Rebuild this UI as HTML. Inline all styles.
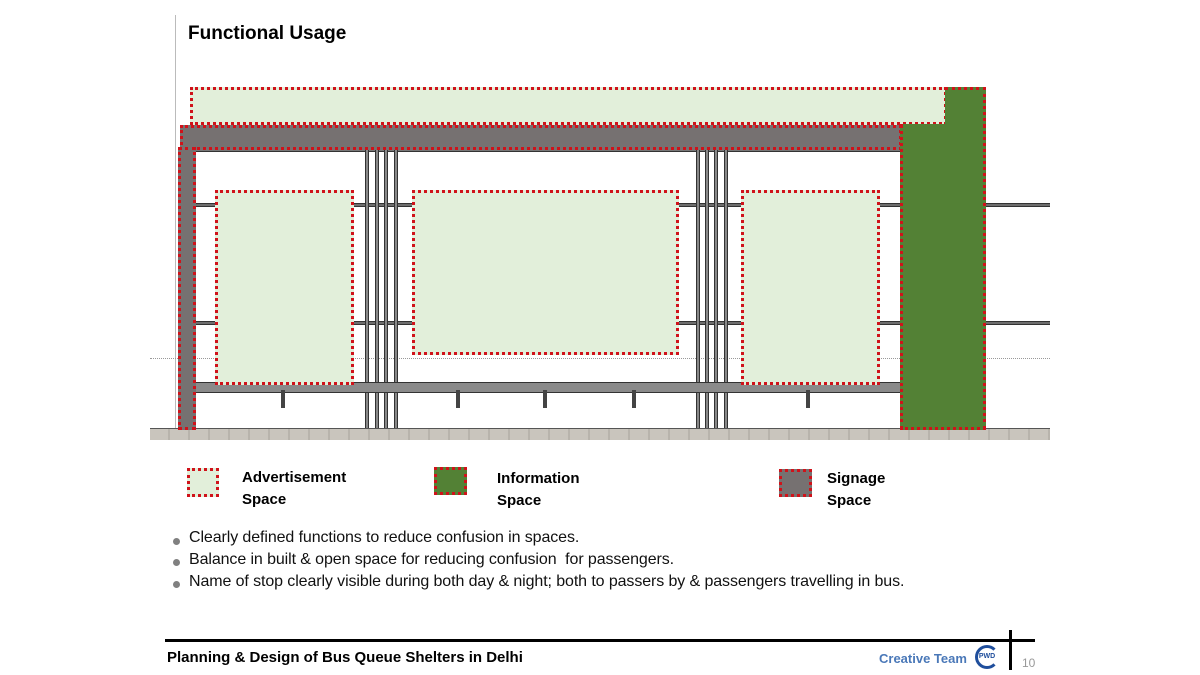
<!DOCTYPE html>
<html><head><style>
body{margin:0;width:1200px;height:675px;background:#fff;position:relative;overflow:hidden;font-family:"Liberation Sans",Arial,sans-serif}
div{position:absolute;box-sizing:border-box}
.ad{background:#e2efda;border:3px dotted #d0121a}
.rail{background:#6e6e6e;height:4px;border-top:1px solid #333;border-bottom:1px solid #333}
.post{width:4px;background:#888;border-left:1px solid #333;border-right:1px solid #333;top:150px;height:278px}
.t{font-weight:bold;font-size:15px;line-height:22px;color:#000}
.b{font-size:16px;color:#111;left:189px;white-space:nowrap;letter-spacing:-0.1px}
.dot{width:7px;height:7px;border-radius:50%;background:#808080;left:173px}
</style></head><body>
<div style="left:175px;top:15px;width:1px;height:425px;background:#bbb"></div>
<div style="left:188px;top:23px;font-size:19px;font-weight:bold">Functional Usage</div>
<div style="left:150px;top:358px;width:900px;border-top:1px dotted #999"></div>
<div class="rail" style="left:195px;top:203px;width:855px"></div>
<div class="rail" style="left:195px;top:321px;width:855px"></div>
<div style="left:195px;top:148px;width:706px;height:4px;background:#777;border-bottom:1px solid #333"></div>
<div class="post" style="left:365px"></div><div class="post" style="left:375px"></div><div class="post" style="left:384px"></div><div class="post" style="left:394px"></div>
<div class="post" style="left:696px"></div><div class="post" style="left:705px"></div><div class="post" style="left:714px"></div><div class="post" style="left:724px"></div>
<div style="left:195px;top:382px;width:706px;height:11px;background:#8a8a8a;border:1px solid #333"></div>
<div style="left:281px;top:390px;width:4px;height:18px;background:#444"></div>
<div style="left:456px;top:390px;width:4px;height:18px;background:#444"></div>
<div style="left:543px;top:390px;width:4px;height:18px;background:#444"></div>
<div style="left:632px;top:390px;width:4px;height:18px;background:#444"></div>
<div style="left:806px;top:390px;width:4px;height:18px;background:#444"></div>
<div style="left:150px;top:428px;width:900px;height:12px;background:repeating-linear-gradient(90deg,#c9c5bd 0 18px,#b8b4ac 18px 20px);border-top:1px solid #555"></div>
<div class="ad" style="left:190px;top:87px;width:757px;height:38px"></div>
<div style="left:180px;top:125px;width:722px;height:25px;background:#767171;border:3px dotted #d0121a"></div>
<div style="left:178px;top:147px;width:18px;height:283px;background:#767171;border:3px dotted #d0121a"></div>
<div style="left:945px;top:87px;width:41px;height:40px;background:#538135;border:3px dotted #d0121a;border-bottom:none;border-left:none"></div>
<div style="left:900px;top:124px;width:86px;height:306px;background:#538135;border:3px dotted #d0121a;border-top:none"></div>
<div class="ad" style="left:215px;top:190px;width:139px;height:195px"></div>
<div class="ad" style="left:412px;top:190px;width:267px;height:165px"></div>
<div class="ad" style="left:741px;top:190px;width:139px;height:195px"></div>
<div class="ad" style="left:187px;top:468px;width:32px;height:29px"></div>
<div class="t" style="left:242px;top:467px">Advertisement<br>Space</div>
<div style="left:434px;top:467px;width:33px;height:28px;background:#538135;border:3px dotted #d0121a"></div>
<div class="t" style="left:497px;top:468px">Information<br>Space</div>
<div style="left:779px;top:469px;width:33px;height:28px;background:#767171;border:3px dotted #d0121a"></div>
<div class="t" style="left:827px;top:468px">Signage<br>Space</div>
<div class="dot" style="top:538px"></div><div class="b" style="top:529px">Clearly defined functions to reduce confusion in spaces.</div>
<div class="dot" style="top:559px"></div><div class="b" style="top:551px">Balance in built &amp; open space for reducing confusion&nbsp; for passengers.</div>
<div class="dot" style="top:581px"></div><div class="b" style="top:573px">Name of stop clearly visible during both day &amp; night; both to passers by &amp; passengers travelling in bus.</div>
<div style="left:165px;top:639px;width:870px;height:3px;background:#000"></div>
<div style="left:1009px;top:630px;width:3px;height:40px;background:#000"></div>
<div style="left:167px;top:649px;font-size:15px;font-weight:bold">Planning &amp; Design of Bus Queue Shelters in Delhi</div>
<div style="left:879px;top:651px;font-size:13px;font-weight:bold;color:#4a78b8">Creative Team</div>
<div style="left:975px;top:645px;width:24px;height:24px;border:3px solid #1f4e9c;border-radius:50%;border-right-color:transparent;font-size:7px;font-weight:bold;color:#1f4e9c;text-align:center;line-height:18px">PWD</div>
<div style="left:1022px;top:656px;font-size:12px;color:#999">10</div>
</body></html>
